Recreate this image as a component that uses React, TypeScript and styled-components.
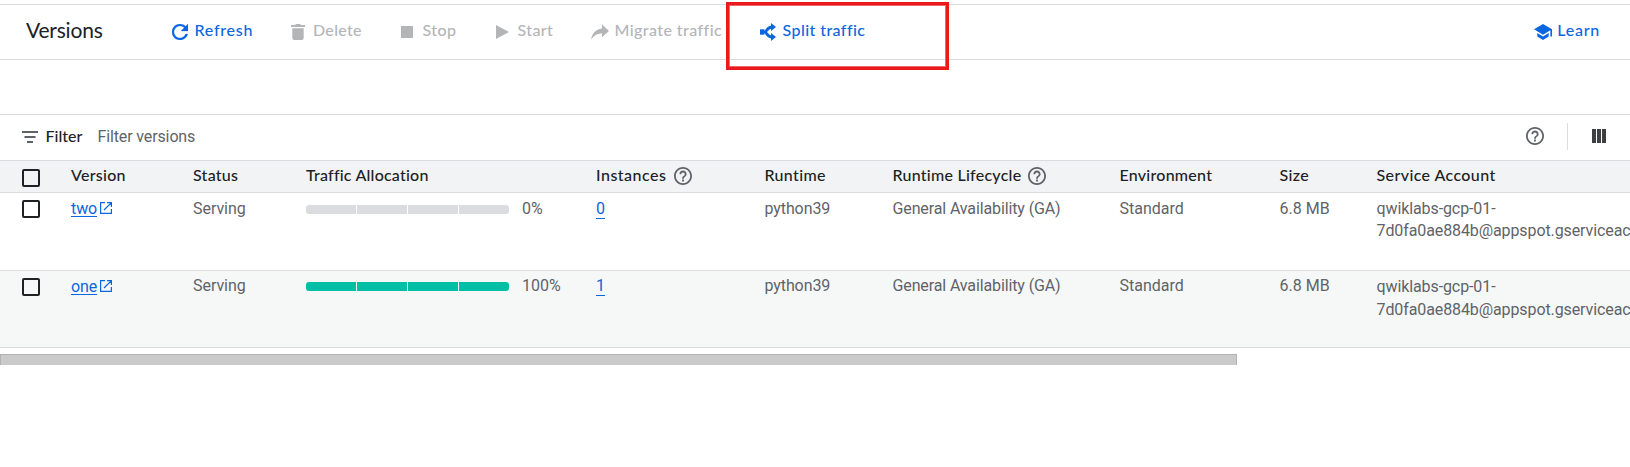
import React from "react";
import styled, { createGlobalStyle } from "styled-components";

const color = {
  ink: "#202124",
  body: "#5f6368",
  blue: "#0b66e0",
  disabled: "#b4b5b7",
  line: "#dadce0",
};
const display = `Lato, "Open Sans", sans-serif`;

const GlobalStyle = createGlobalStyle`
  * { box-sizing: border-box; }
  body { margin: 0; background: #fff; font-family: Roboto, sans-serif; font-size: 16px; color: ${color.body}; overflow: hidden; }
  svg { display: block; flex: none; }
`;

const Page = styled.main`
  width: 100%;
  height: 467px;
  padding-top: 4px;
  overflow: hidden;
`;

const Toolbar = styled.header`
  display: flex;
  height: 56px;
  padding: 0 30px 0 26px;
  border: 1px solid ${color.line};
  border-width: 1px 0;
`;

const Title = styled.h1`
  width: 146px;
  margin: 0;
  padding-top: 11px;
  font: 400 21px/28px ${display};
  letter-spacing: -0.2px;
  color: ${color.ink};
`;

const Actions = styled.nav`
  display: grid;
  grid-template-columns: 119px 110px 95px 95px 169px 120px;
  flex: 1;
`;

const Action = styled.button<{ $off?: boolean; $track?: number }>`
  display: flex;
  align-items: center;
  height: 54px;
  padding: 0;
  border: 0;
  background: none;
  white-space: nowrap;
  color: ${(p) => (p.$off ? color.disabled : color.blue)};
  font: 500 16px/24px ${display};
  letter-spacing: ${(p) => p.$track ?? 0}px;
`;

const IconSlot = styled.span<{ $w: number }>`
  width: ${(p) => p.$w}px;
  flex: none;
`;

const ActionText = styled.span`
  padding-bottom: 4px;
`;

const Highlight = styled.div`
  position: absolute;
  left: 726px;
  top: 2px;
  width: 223px;
  height: 68px;
  border: 3px solid #ea1a1c;
  box-shadow: inset 0 0 0 1px #f06a6b;
  pointer-events: none;
`;

const FilterBar = styled.section`
  display: flex;
  align-items: center;
  height: 47px;
  margin-top: 54px;
  padding: 0 24px 3px 22px;
  border: 1px solid ${color.line};
  border-width: 1px 0;
`;

const FilterLabel = styled.span`
  width: 52px;
  margin-left: 7.5px;
  padding-bottom: 1px;
  font: 500 16px/22px ${display};
  color: ${color.ink};
`;

const Placeholder = styled.span`
  flex: 1;
  padding-top: 1px;
  line-height: 22px;
  letter-spacing: -0.13px;
`;

const Divider = styled.i`
  width: 1px;
  height: 27px;
  margin: 0 24px 0 23px;
  background: ${color.line};
`;

const Row = styled.div<{ $height: number; $tone?: string }>`
  display: grid;
  grid-template-columns: 71px 122px 113px 290px 168.5px 128px 227px 160px 97px 253.5px;
  height: ${(p) => p.$height}px;
  border-bottom: 1px solid ${color.line};
  background: ${(p) => p.$tone ?? "#fff"};
`;

const HeadCell = styled.div<{ $track?: number; $gap?: number }>`
  display: flex;
  align-items: center;
  gap: ${(p) => p.$gap ?? 7}px;
  height: 30px;
  white-space: nowrap;
  font: 500 16px/22px ${display};
  letter-spacing: ${(p) => p.$track ?? 0}px;
  color: ${color.ink};
`;

const HeadText = styled.span`
  padding-bottom: 2px;
`;

const Cell = styled.div<{ $track?: number; $top: number; $leading?: number }>`
  padding-top: ${(p) => p.$top}px;
  line-height: ${(p) => p.$leading ?? 22}px;
  white-space: nowrap;
  letter-spacing: ${(p) => p.$track ?? 0}px;
`;

const CheckCell = styled.div<{ $top: number }>`
  padding: ${(p) => p.$top}px 0 0 22px;
`;

const Box = styled.span`
  display: block;
  width: 18px;
  height: 18px;
  border: 2px solid ${color.ink};
  border-radius: 2px;
`;

const VersionLink = styled.a`
  display: flex;
  gap: 3px;
  color: ${color.blue};
`;

const LinkText = styled.span`
  text-decoration: underline;
  text-underline-offset: 2px;
`;

const LinkIcon = styled.span`
  padding-top: 4px;
`;

const Traffic = styled.div<{ $top: number }>`
  display: flex;
  padding-top: ${(p) => p.$top}px;
  line-height: 22px;
`;

const Meter = styled.div<{ $on: boolean }>`
  display: grid;
  grid-template-columns: repeat(4, 50px);
  gap: 1px;
  height: 9px;
  margin: 7px 13px 0 0;
  border-radius: 3px;
  overflow: hidden;

  i {
    background: ${(p) => (p.$on ? "#00bfa5" : color.line)};
  }
`;

const Count = styled.a`
  display: inline-block;
  height: 21px;
  border-bottom: 1px solid ${color.blue};
  color: ${color.blue};
`;

const ScrollThumb = styled.div`
  width: 1237px;
  height: 11px;
  margin-top: 6px;
  background: #cacaca;
  border: 1px solid #b2b2b2;
  border-bottom: 0;
`;

const Help = () => (
  <svg width="18" height="18" viewBox="2 2 20 20" fill="#5f6368">
    <path d="M11 18h2v-2h-2v2zm1-16C6.48 2 2 6.48 2 12s4.48 10 10 10 10-4.48 10-10S17.52 2 12 2zm0 18c-4.41 0-8-3.59-8-8s3.59-8 8-8 8 3.59 8 8-3.59 8-8 8zm0-14c-2.21 0-4 1.79-4 4h2c0-1.1.9-2 2-2s2 .9 2 2c0 2-3 1.75-3 5h2c0-2.25 3-2.5 3-5 0-2.21-1.79-4-4-4z" />
  </svg>
);

const RefreshIcon = () => (
  <svg width="16" height="16" viewBox="4 4 16 16" fill="currentColor">
    <path stroke="currentColor" strokeWidth=".3" d="M17.65 6.35C16.2 4.9 14.21 4 12 4c-4.42 0-7.99 3.58-7.99 8s3.57 8 7.99 8c3.73 0 6.84-2.55 7.73-6h-2.08c-.82 2.33-3.04 4-5.65 4-3.31 0-6-2.69-6-6s2.69-6 6-6c1.66 0 3.14.69 4.22 1.78L13 11h7V4l-2.35 2.35z" />
  </svg>
);

const DeleteIcon = () => (
  <svg width="14" height="16" viewBox="0 0 14 16" fill="currentColor">
    <path d="M0 1h4l1-1h4l1 1h4v2H0zM1.3 4.2h11.4V14a2 2 0 0 1-2 2H3.300a2 2 0 0 1-2-2z" />
  </svg>
);

const StopIcon = () => (
  <svg width="12" height="12" viewBox="0 0 12 12" fill="currentColor">
    <path d="M0 0h12v12H0z" />
  </svg>
);

const StartIcon = () => (
  <svg width="13" height="14" viewBox="0 0 13 14" fill="currentColor">
    <path d="M0 0l13 7-13 7z" />
  </svg>
);

const MigrateIcon = () => (
  <svg width="18" height="16" viewBox="0 0 18 16" fill="currentColor">
    <path d="M11 .5l7 6.500-7 6.300V9.500C6.200 9.500 3 11.500 0 15.800 1 10 4.200 5.500 11 4.500z" />
  </svg>
);

const SplitIcon = () => (
  <svg width="16" height="18" viewBox="0 0 16 18">
    <path d="M0 6.300h4.300v5.400H0z" fill="currentColor" />
    <path d="M3 9h2C7 8 7.500 4 12 4M5 9c2 1 2.500 5 7 5" fill="none" stroke="currentColor" strokeWidth="2.800" />
    <path d="M11 0L16 4l-5 4zM11 10l5 4-5 4z" fill="currentColor" />
  </svg>
);

const LearnIcon = () => (
  <svg width="18" height="16" viewBox="1 3 22 18" preserveAspectRatio="none" fill="currentColor">
    <path d="M5 13.180v4L12 21l7-3.820v-4L12 17l-7-3.820zM12 3L1 9l11 6 9-4.910V17h2V9L12 3z" />
  </svg>
);

const FilterIcon = () => (
  <svg width="16" height="14" viewBox="0 -2 16 14" fill="#5f6368">
    <path d="M0 0h16v2H0zM2.500 5h11v2h-11zM5 10h6v2H5z" />
  </svg>
);

const ColumnsIcon = () => (
  <svg width="14" height="14" viewBox="0 0 14 14" fill="#3c4043">
    <path d="M0 0h4v14H0zM5 0h4v14H5zM10 0h4v14h-4z" />
  </svg>
);

const OpenIcon = () => (
  <svg width="12" height="12" viewBox="0 0 12 12" fill="none" stroke="currentColor" strokeWidth="1.200">
    <path d="M5 .6H.6v10.800h10.800V7M7 .6h4.400V5M11.200.8L4 8" />
  </svg>
);

const actions = [
  { text: "Refresh", icon: <RefreshIcon />, slot: 22.5, track: 0.72 },
  { text: "Delete", icon: <DeleteIcon />, slot: 22, track: 0.3, off: true },
  { text: "Stop", icon: <StopIcon />, slot: 21.5, track: 0.43, off: true },
  { text: "Start", icon: <StartIcon />, slot: 21.5, track: 0.37, off: true },
  { text: "Migrate traffic", icon: <MigrateIcon />, slot: 23.5, track: 0.43, off: true },
  { text: "Split traffic", icon: <SplitIcon />, slot: 22.5, track: 0.43 },
];

const versions = [
  { name: "two", share: 0, instances: 0, height: 78, top: 5, leading: 22, tone: "#fff" },
  { name: "one", share: 100, instances: 1, height: 77, top: 4, leading: 23, tone: "#f6f8f8" },
];

export default function App() {
  return (
    <Page>
      <GlobalStyle />
      <Toolbar>
        <Title>Versions</Title>
        <Actions>
          {actions.map((a) => (
            <Action key={a.text} $off={a.off} $track={a.track}>
              <IconSlot $w={a.slot}>{a.icon}</IconSlot>
              <ActionText>{a.text}</ActionText>
            </Action>
          ))}
        </Actions>
        <Action $track={0.75}>
          <IconSlot $w={23.5}><LearnIcon /></IconSlot>
          <ActionText>Learn</ActionText>
        </Action>
      </Toolbar>
      <Highlight />

      <FilterBar>
        <FilterIcon />
        <FilterLabel>Filter</FilterLabel>
        <Placeholder>Filter versions</Placeholder>
        <Help />
        <Divider />
        <ColumnsIcon />
      </FilterBar>

      <Row $height={32} $tone="#f1f3f4">
        <CheckCell $top={8}><Box /></CheckCell>
        <HeadCell $track={0.27}><HeadText>Version</HeadText></HeadCell>
        <HeadCell $track={0.25}><HeadText>Status</HeadText></HeadCell>
        <HeadCell $track={0.22}><HeadText>Traffic Allocation</HeadText></HeadCell>
        <HeadCell $track={0.5}><HeadText>Instances</HeadText><Help /></HeadCell>
        <HeadCell $track={0.33}><HeadText>Runtime</HeadText></HeadCell>
        <HeadCell $track={0.25}><HeadText>Runtime Lifecycle</HeadText><Help /></HeadCell>
        <HeadCell $track={0.25}><HeadText>Environment</HeadText></HeadCell>
        <HeadCell $track={0.4}><HeadText>Size</HeadText></HeadCell>
        <HeadCell $track={0.4}><HeadText>Service Account</HeadText></HeadCell>
      </Row>

      {versions.map((v) => (
        <Row key={v.name} $height={v.height} $tone={v.tone}>
          <CheckCell $top={7}><Box /></CheckCell>
          <Cell $top={5} $track={-0.1}>
            <VersionLink>
              <LinkText>{v.name}</LinkText>
              <LinkIcon><OpenIcon /></LinkIcon>
            </VersionLink>
          </Cell>
          <Cell $top={v.top} $track={-0.05}>Serving</Cell>
          <Traffic $top={v.top}>
            <Meter $on={v.share > 0}><i /><i /><i /><i /></Meter>
            {v.share}%
          </Traffic>
          <Cell $top={v.top}><Count>{v.instances}</Count></Cell>
          <Cell $top={v.top} $track={-0.1}>python39</Cell>
          <Cell $top={v.top} $track={-0.12}>General Availability (GA)</Cell>
          <Cell $top={v.top}>Standard</Cell>
          <Cell $top={v.top}>6.8 MB</Cell>
          <Cell $top={v.top} $leading={v.leading} $track={-0.1}>qwiklabs-gcp-01-<br />7d0fa0ae884b@appspot.gserviceaccount.com</Cell>
        </Row>
      ))}
      <ScrollThumb />
    </Page>
  );
}
